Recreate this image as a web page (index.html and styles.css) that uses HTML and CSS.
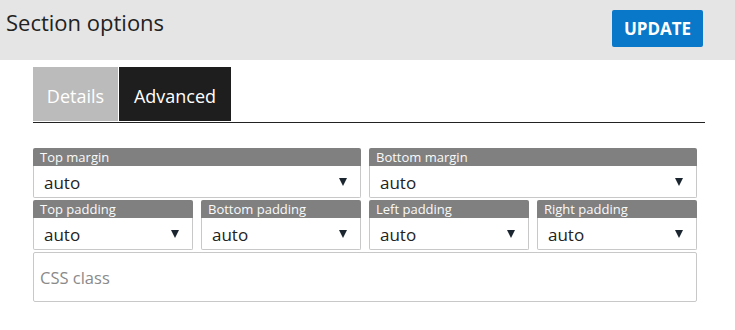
FILE: index.html
```html
<!DOCTYPE html>
<html>
<head>
<meta charset="utf-8">
<link rel="stylesheet" href="styles.css">
</head>
<body>
<header class="topbar">
  <h1 class="title">Section options</h1>
  <button class="update">UPDATE</button>
</header>
<main class="panel">
  <nav class="tabs">
    <div class="tab">Details</div>
    <div class="tab active">Advanced</div>
  </nav>
  <div class="fields">
    <div class="row two">
      <div class="field"><div class="label">Top margin</div><div class="select"><span>auto</span><i class="arrow"></i></div></div>
      <div class="field"><div class="label">Bottom margin</div><div class="select"><span>auto</span><i class="arrow"></i></div></div>
    </div>
    <div class="row four">
      <div class="field"><div class="label">Top padding</div><div class="select"><span>auto</span><i class="arrow"></i></div></div>
      <div class="field"><div class="label">Bottom padding</div><div class="select"><span>auto</span><i class="arrow"></i></div></div>
      <div class="field"><div class="label">Left padding</div><div class="select"><span>auto</span><i class="arrow"></i></div></div>
      <div class="field"><div class="label">Right padding</div><div class="select"><span>auto</span><i class="arrow"></i></div></div>
    </div>
    <div class="css-input">CSS class</div>
  </div>
</main>
</body>
</html>
```
FILE: styles.css
```css
* { box-sizing: border-box; }
body {
  margin: 0;
  font-family: "Open Sans", "Noto Sans", sans-serif;
  background: #fff;
  color: #222;
}
.topbar {
  height: 60px;
  background: #e5e5e5;
  display: flex;
  justify-content: space-between;
  align-items: flex-start;
  padding: 0 32px 0 6px;
}
.title {
  margin: 0;
  font-weight: 400;
  font-size: 22px;
  line-height: 30px;
  padding-top: 7px;
  color: #222;
}
.update {
  margin-top: 10px;
  width: 91px;
  height: 37px;
  border: none;
  border-radius: 2px;
  background: #0a78c8;
  color: #fff;
  font-family: "Open Sans", sans-serif;
  font-weight: 700;
  font-size: 17px;
  padding: 0;
}
.panel {
  margin-top: 7px;
  margin-left: 33px;
  width: 672px;
}
.tabs {
  display: flex;
  gap: 1px;
  border-bottom: 1px solid #222;
  height: 56px;
  padding-bottom: 1px;
}
.tab {
  height: 54px;
  padding: 3px 13px 0;
  display: flex;
  align-items: center;
  font-size: 18px;
  color: #fff;
  background: #bbbbbb;
  width: 85px;
  justify-content: center;
}
.tab.active {
  background: #1e1e1e;
  width: 112px;
}
.fields {
  margin-top: 25px;
  width: 664px;
  display: flex;
  flex-direction: column;
  gap: 2px;
}
.row {
  display: grid;
  gap: 8px;
}
.row.two { grid-template-columns: 1fr 1fr; }
.row.four { grid-template-columns: repeat(4, 1fr); }
.field {
  display: flex;
  flex-direction: column;
  height: 50px;
}
.label {
  height: 18px;
  background: #808080;
  color: #fafafa;
  font-size: 13px;
  line-height: 19px;
  padding-left: 7px;
  border-radius: 2px 2px 0 0;
}
.select {
  flex: 1;
  border: 1px solid #c8c8c8;
  border-top: none;
  border-radius: 0 0 2px 2px;
  display: flex;
  align-items: center;
  justify-content: space-between;
  padding: 1px 13px 0 10px;
  font-size: 17px;
  color: #222;
}
.arrow {
  width: 0;
  height: 0;
  border-left: 4px solid transparent;
  border-right: 4px solid transparent;
  border-top: 8px solid #1b2631;
}
.css-input {
  height: 50px;
  border: 1px solid #c8c8c8;
  border-radius: 2px;
  display: flex;
  align-items: center;
  padding-left: 6px;
  font-size: 16.5px;
  color: #8a8a8a;
}
```
